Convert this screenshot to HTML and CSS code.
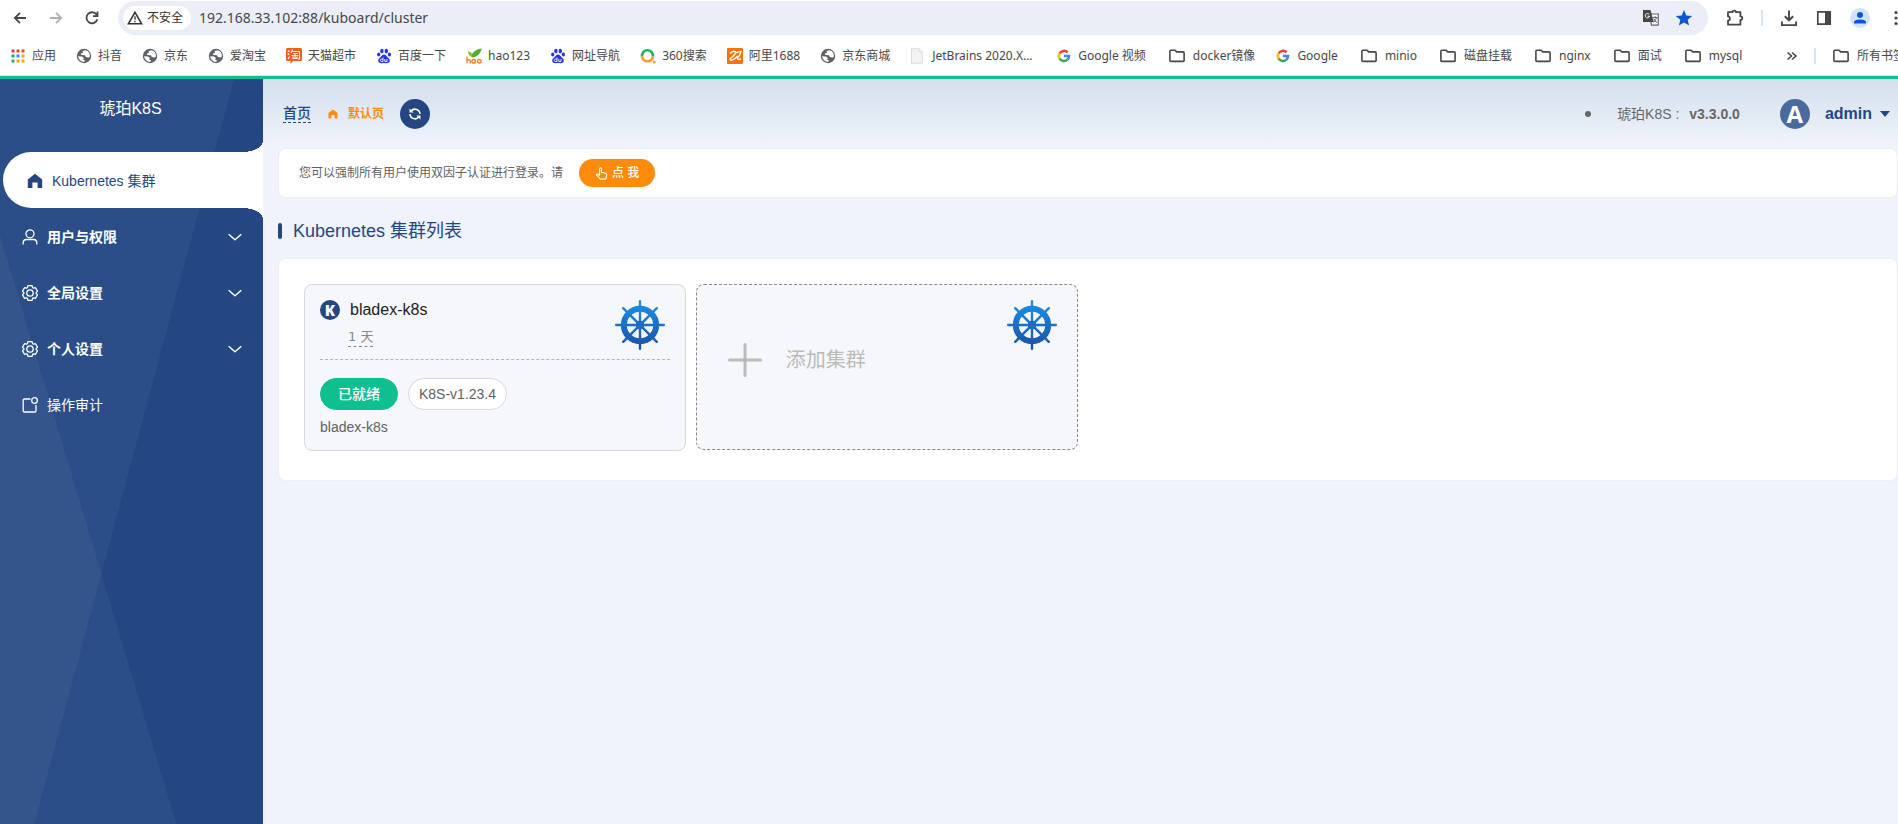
FILE: index.html
```html
<!DOCTYPE html>
<html lang="zh-CN">
<head>
<meta charset="utf-8">
<title>Kuboard</title>
<link rel="stylesheet" href="styles.css">
</head>
<body>
<svg class="defs" aria-hidden="true">
  <defs>
    <linearGradient id="wheel-fill" gradientUnits="userSpaceOnUse" x1="0" y1="0" x2="0" y2="50"><stop offset="0" stop-color="#1b91ea"/><stop offset="1" stop-color="#1c4f9f"/></linearGradient>
    <symbol id="globe" viewBox="0 0 16 16"><circle cx="8" cy="8" r="7.2" fill="#5f6368"/><path d="M9.200 2.200 6.500 3.200 7 4.800 5 5.400 5.200 7 9 7.200 9.800 9 12.800 9.400 13.900 8.400A6 6 0 0 0 9.200 2.200ZM2.100 8.200 6 8.600 7.800 10 7.200 11.800 9 12.200 8.200 13.900A6 6 0 0 1 2.100 8.200Z" fill="#fff"/></symbol>
    <symbol id="folder" viewBox="0 0 16 16"><path d="M.9 3.100q0-.9.900-.9h4.300l1.600 1.700h6.500q.9 0 .9.900v7.700q0 .9-.9.900H1.800q-.9 0-.9-.9Z" fill="none" stroke="#474747" stroke-width="1.600"/></symbol>
    <symbol id="baidu" viewBox="0 0 16 16"><g fill="#2932e1"><ellipse cx="5.900" cy="3.100" rx="1.700" ry="2.300"/><ellipse cx="10.300" cy="3.100" rx="1.700" ry="2.300"/><ellipse cx="2.700" cy="6.500" rx="1.600" ry="2.100"/><ellipse cx="13.400" cy="6.500" rx="1.600" ry="2.100"/><path d="M8 6.400c1.800 0 2.400 1.600 3.600 2.800 1.400 1.300 2.600 2.200 2.100 4.100-.6 2.200-2.400 1.800-5.700 1.800s-5.100.4-5.700-1.800C1.800 11.400 3 10.500 4.400 9.200 5.600 8 6.200 6.400 8 6.400Z"/></g><path d="M7 9.500v4H5.500a1.200 1.200 0 0 1 0-2.400H7M8.800 11v2.500h2.200V11" fill="none" stroke="#fff" stroke-width=".9"/></symbol>
    <symbol id="google" viewBox="0 0 16 16"><g fill="none" stroke-width="2.500"><path d="M3.700 5.300A5 5 0 0 1 11.600 4.400" stroke="#ea4335"/><path d="M3.700 10.700A5 5 0 0 1 3.700 5.300" stroke="#fbbc05"/><path d="M3.700 10.700A5 5 0 0 0 11.400 11.700" stroke="#34a853"/><path d="M11.400 11.700A5 5 0 0 0 13 8H8" stroke="#4285f4"/></g></symbol>
    <symbol id="gear" viewBox="0 0 16 16"><g fill="none" stroke="currentColor" stroke-width="1.300" stroke-linejoin="round"><path d="M5.900.700h4.200l.5 1.900 1 .600 1.900-.5 2 3.500L14.100 7.600v.8l1.400 1.400-2 3.500-1.900-.5-1 .6-.5 1.900H5.900l-.5-1.900-1-.6-1.900.5-2-3.500L1.900 8.400v-.8L.5 6.200l2-3.500 1.900.5 1-.6Z"/><circle cx="8" cy="8" r="3.200"/></g></symbol>
    <symbol id="home" viewBox="0 0 16 16"><path d="M8 .8 15.200 6.500V15H10.600V9.500H5.400V15H.8V6.500Z" fill="currentColor"/></symbol>
    <symbol id="chevron" viewBox="0 0 14 14"><path d="m1.500 4.500 5.500 5L12.500 4.500" fill="none" stroke="currentColor" stroke-width="1.200"/></symbol>
    <symbol id="wheel" viewBox="0 0 50 50"><g fill="none" stroke="url(#wheel-fill)"><circle cx="25" cy="25" r="16.200" stroke-width="6"/><g stroke-width="2.400" stroke-linecap="round"><path d="M25 1.200 25.010 48.800M1.200 25 48.800 25.010M8.200 8.200 41.800 41.800M41.800 8.200 8.200 41.800"/></g></g><circle cx="25" cy="25" r="4.300" fill="#1f6bc0"/></symbol>
  </defs>
</svg>

<header class="browser">
  <div class="toolbar">
    <button class="tool" aria-label="后退"><svg viewBox="0 0 18 18"><path d="M15 9H4M9 3.800 3.800 9 9 14.200" fill="none" stroke="#474747" stroke-width="1.800"/></svg></button>
    <button class="tool" aria-label="前进"><svg viewBox="0 0 18 18"><path d="M3 9h11M9 3.800 14.200 9 9 14.200" fill="none" stroke="#b0b0b0" stroke-width="1.800"/></svg></button>
    <button class="tool reload" aria-label="重新加载"><svg viewBox="0 0 18 18"><path d="M14.300 10.200A5.500 5.500 0 1 1 13.500 5.600L14.500 7M14.500 2.500V7.200H10" fill="none" stroke="#474747" stroke-width="1.800"/></svg></button>
    <div class="omnibox">
      <button class="security"><svg viewBox="0 0 16 16"><path d="M8 2.300 14.600 13.700H1.400Z" fill="none" stroke="#333" stroke-width="1.600"/><path d="M8 6.200v3.600M8 10.800v1.500" stroke="#333" stroke-width="1.300"/></svg>不安全</button>
      <input class="url" aria-label="地址" value="192.168.33.102:88/kuboard/cluster">
      <button class="tool" aria-label="翻译"><svg viewBox="0 0 18 18"><path d="M7.500 5H16.200V16.200H9.500Z" fill="#fff" stroke="#5f6368" stroke-width="1.200"/><path d="M1 1h7.500l3.300 12H1Z" fill="#474747"/><path d="M7.200 5.400A2.200 2.200 0 1 0 7.600 7.200H5.500" fill="none" stroke="#fff"/><path d="M10.800 8.500h4.800M13 7.200v1.300M14.500 8.800q-.8 3-3 4.600M11.800 9.500q1 2.800 3.200 4" fill="none" stroke="#5f6368"/></svg></button>
      <button class="tool" aria-label="收藏"><svg viewBox="0 0 18 18"><path d="m9 1 2.300 5.400 5.900.5-4.500 3.900 1.400 5.700L9 13.500l-5.100 3 1.400-5.700L.8 6.900l5.900-.5Z" fill="#0b57d0"/></svg></button>
    </div>
    <div class="tools">
      <button class="tool" aria-label="扩展程序"><svg viewBox="0 0 18 18"><path d="M2 3.200h4.500C6.500 1 10 1 10 3.200h4.400v4.200c2.500 0 2.500 3.600 0 3.600v4.700H2v-4c2.500-.2 2.500-4.200 0-4.400Z" fill="none" stroke="#474747" stroke-width="1.800" stroke-linejoin="round"/></svg></button>
      <span class="sep"></span>
      <button class="tool" aria-label="下载"><svg viewBox="0 0 18 18"><path d="M9 1.500V11M4.800 7.200 9 11.300l4.200-4.100M1.900 12.500v3.600h14.200v-3.600" fill="none" stroke="#474747" stroke-width="1.900"/></svg></button>
      <button class="tool" aria-label="侧边栏"><svg viewBox="0 0 18 18"><path d="M2.800 2.800h12.400v12.400H2.800Z" fill="none" stroke="#474747" stroke-width="1.700"/><path d="M10 2.500h5.500v13H10Z" fill="#474747"/></svg></button>
      <button class="profile" aria-label="个人资料"><svg viewBox="0 0 20 20"><circle cx="10" cy="10" r="10" fill="#d3e3fd"/><circle cx="10" cy="7" r="3" fill="#0b57d0"/><path d="M4 15.500v-1.500c0-3.500 12-3.500 12 0v1.500Z" fill="#0b57d0"/></svg></button>
      <button class="tool" aria-label="更多"><svg viewBox="0 0 18 18"><g fill="#474747"><circle cx="9" cy="3.500" r="1.600"/><circle cx="9" cy="9" r="1.600"/><circle cx="9" cy="14.500" r="1.600"/></g></svg></button>
    </div>
  </div>
  <nav class="bookmarks" aria-label="书签">
    <a href="#"><svg viewBox="0 0 16 16"><path d="M1.500 1.500h3v3h-3zM6.500 1.500h3v3h-3zM11.500 1.500h3v3h-3z" fill="#ea4335"/><path d="M1.500 6.500h3v3h-3zM1.500 11.500h3v3h-3z" fill="#34a853"/><path d="M6.500 6.500h3v3h-3z" fill="#4285f4"/><path d="M11.500 6.500h3v3h-3zM6.500 11.500h3v3h-3zM11.500 11.500h3v3h-3z" fill="#f5a80c"/></svg>应用</a>
    <a href="#"><svg><use href="#globe"/></svg>抖音</a>
    <a href="#"><svg><use href="#globe"/></svg>京东</a>
    <a href="#"><svg><use href="#globe"/></svg>爱淘宝</a>
    <a href="#"><svg viewBox="0 0 16 16"><path d="M1.500 0h13Q16 0 16 1.500v10q0 1.500-1.500 1.500H7l-2.500 3V13h-3Q0 13 0 11.500v-10Q0 0 1.500 0Z" fill="#fa5a1c"/><path d="M2 2.500 3.500 4M1.700 5.500 3.200 6.800M2 11l1.500-2.500M6.500 1.500 5 5M6 3.500h7.500v7.500h-1.500M7 5.500h5M5.500 7.500h7M9 5.500v4.500M7 8.500V10.500h4V8.500" fill="none" stroke="#fff" stroke-width="1.100"/></svg>天猫超市</a>
    <a href="#"><svg><use href="#baidu"/></svg>百度一下</a>
    <a href="#"><svg viewBox="0 0 16 16"><path d="M2 3.500q3 .2 4 2.500Q9.500 1.200 15.800.500 14 8 6.500 9.500 3 8 2 3.500Z" fill="#4cae32"/><path d="M2 3.500q3 .2 4 2.500l.5 3.500Q3 8 2 3.500Z" fill="#93c81e"/><path d="M1 8.500v7M1 12.500q3-2 3.300.300v2.700M9.200 11v4.500M9.200 13.200a1.700 1.900 0 1 0 0 .1M15.200 13.300a1.900 1.800 0 1 0-3.800 0 1.900 1.800 0 1 0 3.800 0" fill="none" stroke="#f07b22" stroke-width="1.300"/></svg>hao123</a>
    <a href="#"><svg><use href="#baidu"/></svg>网址导航</a>
    <a href="#"><svg viewBox="0 0 16 16"><g fill="none" stroke-width="2.600"><path d="M2 8.500A5.500 5.500 0 1 1 12.900 8.500" stroke="#18b565"/><path d="M2 8.500A5.500 5.500 0 0 0 12.900 8.500" stroke="#fb9a2c"/></g><circle cx="14.300" cy="14" r="1.500" fill="#fb9a2c"/></svg>360搜索</a>
    <a href="#"><svg viewBox="0 0 16 16"><path d="M1 0h14q1 0 1 1v14q0 1-1 1H1q-1 0-1-1V1q0-1 1-1Z" fill="#ff7300"/><path d="M3 5.500Q7 2 8.500 4q0 2.500-4 5.500-3 2.500 0 2.800 3.500-.8 6-4.300M8.500 5q3-1.500 5.500-1.500-1 4-3.500 6.500-.5 2 3.500 1" fill="none" stroke="#fff" stroke-width="1.300"/></svg>阿里1688</a>
    <a href="#"><svg><use href="#globe"/></svg>京东商城</a>
    <a href="#" class="long"><svg viewBox="0 0 16 16"><path d="M1.500.7h7.800l3 3v11.600H1.500Z" fill="#f3f3f3" stroke="#dcdcdc"/><path d="M9.300.7v3h3" fill="#fff" stroke="#dcdcdc"/></svg>JetBrains 2020.X...</a>
    <a href="#"><svg><use href="#google"/></svg>Google 视频</a>
    <a href="#" class="dir"><svg><use href="#folder"/></svg>docker镜像</a>
    <a href="#"><svg><use href="#google"/></svg>Google</a>
    <a href="#" class="dir"><svg><use href="#folder"/></svg>minio</a>
    <a href="#" class="dir"><svg><use href="#folder"/></svg>磁盘挂载</a>
    <a href="#" class="dir"><svg><use href="#folder"/></svg>nginx</a>
    <a href="#" class="dir"><svg><use href="#folder"/></svg>面试</a>
    <a href="#" class="dir"><svg><use href="#folder"/></svg>mysql</a>
    <div class="bookmarks-end">
      <button class="overflow" aria-label="更多书签"><svg viewBox="0 0 12 12"><path d="m1.500 2.500 4 3.500-4 3.500M6 2.500 10 6 6 9.500" fill="none" stroke="#474747" stroke-width="1.600"/></svg></button>
      <span class="sep"></span>
      <a href="#" class="dir"><svg><use href="#folder"/></svg>所有书签</a>
    </div>
  </nav>
</header>

<div class="app">
  <aside class="sidebar">
    <h1 class="brand">琥珀K8S</h1>
    <nav class="menu">
      <a href="#" class="item active"><svg><use href="#home"/></svg><span>Kubernetes 集群</span></a>
      <button class="item"><svg viewBox="0 0 16 16"><g fill="none" stroke="currentColor" stroke-width="1.300"><circle cx="8" cy="4.800" r="4"/><path d="M1.200 15.500v-1.700q0-3.300 3.300-3.300h7q3.300 0 3.300 3.300v1.700"/></g></svg><span>用户与权限</span><svg class="arrow"><use href="#chevron"/></svg></button>
      <button class="item"><svg><use href="#gear"/></svg><span>全局设置</span><svg class="arrow"><use href="#chevron"/></svg></button>
      <button class="item"><svg><use href="#gear"/></svg><span>个人设置</span><svg class="arrow"><use href="#chevron"/></svg></button>
      <a href="#" class="item"><svg viewBox="0 0 16 16"><g fill="none" stroke="currentColor" stroke-width="1.300"><path d="M8.500 2H2.500Q1.200 2 1.200 3.300v10.400q0 1.300 1.300 1.300h10.200q1.300 0 1.300-1.300V8"/><circle cx="12.500" cy="3.500" r="2.800"/></g></svg><span>操作审计</span></a>
    </nav>
  </aside>

  <main class="main">
    <header class="topbar">
      <a href="#" class="crumb">首页</a>
      <span class="current"><svg><use href="#home"/></svg>默认页</span>
      <button class="refresh" aria-label="刷新"><svg viewBox="0 0 14 14"><path d="M3 4.200A5 5 0 0 1 12 7M11 9.800A5 5 0 0 1 2 7" fill="none" stroke="#fff" stroke-width="1.600"/><path d="M1.500 1.500v4h4ZM12.500 12.500v-4h-4Z" fill="#fff"/></svg></button>
      <div class="account">
        <span class="dot"></span>
        <span class="version">琥珀K8S : <b>v3.3.0.0</b></span>
        <button class="user"><span class="avatar">A</span>admin<span class="caret"></span></button>
      </div>
    </header>

    <section class="notice">
      <p>您可以强制所有用户使用双因子认证进行登录。请</p>
      <button class="go"><svg viewBox="0 0 14 14"><path d="M5 8.500V2.200q0-1.200 1-1.200t1 1.200v3.600l4.500 1q1 .3 1 1.400v1.500L11.500 13H5.800L1.500 8.500q.2-1.300 1.700-.8L5 9.500" fill="none" stroke="#fff" stroke-width="1.200" stroke-linejoin="round"/></svg>点 我</button>
    </section>

    <h2 class="heading">Kubernetes 集群列表</h2>

    <section class="panel">
      <article class="cluster">
        <div class="cluster-head">
          <div>
            <h3 class="name"><span class="badge">K</span>bladex-k8s</h3>
            <span class="age">1 天</span>
          </div>
          <svg class="wheel"><use href="#wheel"/></svg>
        </div>
        <div class="tags"><span class="tag ready">已就绪</span><span class="tag">K8S-v1.23.4</span></div>
        <p class="desc">bladex-k8s</p>
      </article>
      <button class="cluster add">
        <svg class="plus" viewBox="0 0 34 34"><path d="M17 1.500v31M1.500 17h31" stroke="#bbb" stroke-width="3" stroke-linecap="round"/></svg>
        <span>添加集群</span>
        <svg class="wheel"><use href="#wheel"/></svg>
      </button>
    </section>
  </main>
</div>
</body>
</html>
```
FILE: styles.css
```css
* { box-sizing: border-box; }
html, body { height: 100%; }
body {
  margin: 0;
  display: flex;
  flex-direction: column;
  overflow: hidden;
  background: #f0f3fc;
  font: 14px/20px "Liberation Sans", "Noto Sans CJK SC", sans-serif;
  color: #606266;
}
button, input { font: inherit; color: inherit; border: 0; padding: 0; background: none; }
a { color: inherit; text-decoration: none; }
h1, h2, h3, p { margin: 0; font-weight: 400; }
svg { flex: none; }
.defs { position: absolute; width: 0; height: 0; }

/* Browser chrome */
.browser {
  flex: none;
  background: #fff;
  border-bottom: 1px solid #e0e0e0;
  font-family: "Noto Sans", "Noto Sans CJK SC", sans-serif;
  color: #474747;
  overflow: hidden;
}
.toolbar { display: flex; align-items: center; height: 36px; padding-left: 11px; }
.tool { flex: none; display: flex; justify-content: center; width: 18px; margin-right: 18px; }
.tool svg { width: 18px; height: 18px; }
.toolbar .reload { margin-right: 17px; }
.omnibox {
  flex: 1;
  display: flex;
  align-items: center;
  height: 34px;
  margin-right: 18px;
  padding-left: 5px;
  border-radius: 17px;
  background: #ebeef7;
}
.omnibox .tool { margin-right: 15px; }
.security {
  display: flex;
  align-items: center;
  gap: 4px;
  height: 24px;
  padding: 0 8px 0 4px;
  border-radius: 12px;
  background: #fff;
  font-size: 12px;
  color: #333;
}
.security svg { width: 16px; height: 16px; }
.url { flex: 1; min-width: 0; margin-left: 8px; font-size: 14px; }
.tools { flex: none; display: flex; align-items: center; width: 172px; }
.tools .tool, .profile { margin-right: 17px; }
.sep { flex: none; width: 2px; height: 16px; background: #d3e3fd; }
.tools .sep { margin-right: 17px; }
.profile { flex: none; display: flex; }
.profile svg { width: 20px; height: 20px; }
.bookmarks {
  display: flex;
  align-items: center;
  gap: 20px;
  height: 39px;
  padding-left: 10px;
  font-size: 12px;
  white-space: nowrap;
}
.bookmarks a { flex: none; display: flex; align-items: center; gap: 6px; }
.bookmarks .long { width: 126px; }
.bookmarks .dir { gap: 8px; margin-left: 3px; }
.bookmarks a svg { width: 16px; height: 16px; }
.bookmarks-end { flex: none; display: flex; align-items: center; gap: 14px; width: 112px; margin-left: auto; }
.overflow { display: flex; }
.overflow svg { width: 12px; height: 12px; }
.bookmarks-end .sep { margin-left: 2px; }

/* Application */
.app { flex: 1; display: flex; min-height: 0; border-top: 3px solid #10bf8f; }
.sidebar {
  position: relative;
  flex: none;
  width: 263px;
  background: #244784;
  color: #fff;
}
.sidebar::before, .sidebar::after {
  content: "";
  position: absolute;
  inset: 0;
  background: rgba(255, 255, 255, 0.04);
}
.sidebar::before { clip-path: polygon(0 0, 89% 0, 13% 100%, 0 100%); }
.sidebar::after { clip-path: polygon(0 21%, 67% 100%, 0 100%); }
.brand, .menu { position: relative; z-index: 1; }
.brand { height: 73px; padding: 18px 2px 0 0; font-size: 16px; line-height: 24px; text-align: center; }
.item {
  position: relative;
  display: flex;
  align-items: center;
  gap: 9px;
  width: 100%;
  height: 56px;
  padding: 2px 20px 0 22px;
}
.item svg { width: 16px; height: 16px; }
button.item { font-weight: 700; }
.item .arrow { margin-left: auto; }
.active {
  width: auto;
  margin-left: 3px;
  padding-left: 24px;
  border-radius: 28px 0 0 28px;
  background: #fff;
  color: #244784;
}
.active::before, .active::after {
  content: "";
  position: absolute;
  right: 0;
  width: 20px;
  height: 11px;
}
.active::before { bottom: 100%; background: radial-gradient(20px 11px at 0 0, transparent 98%, #fff); }
.active::after { top: 100%; background: radial-gradient(20px 11px at 0 100%, transparent 98%, #fff); }

.main { flex: 1; min-width: 0; padding-left: 15px; background: linear-gradient(#d3e0ec, #f0f3fc 68px); }
.topbar { display: flex; align-items: center; height: 69px; padding-left: 5px; }
.crumb { border-bottom: 1px dashed #244784; line-height: 18px; font-weight: 500; color: #244784; }
.current { display: flex; align-items: center; gap: 10px; margin: 0 16px 0 17px; font-size: 12px; font-weight: 700; color: #ff8b0a; }
.current svg { width: 10px; height: 10px; }
.refresh { display: flex; align-items: center; justify-content: center; width: 30px; height: 30px; border-radius: 50%; background: #244784; }
.refresh svg { width: 14px; height: 14px; }
.account { display: flex; align-items: center; margin-left: auto; padding-right: 8px; color: #666; }
.dot { width: 6px; height: 6px; margin-right: 26px; border-radius: 50%; background: #666; }
.version b { margin-left: 6px; }
.user { display: flex; align-items: center; margin-left: 40px; font-size: 16px; font-weight: 700; color: #244784; }
.avatar { width: 30px; height: 30px; margin-right: 15px; border-radius: 50%; background: #4a6a9d; font: 700 24px/30px "Open Sans", sans-serif; text-align: center; color: #fff; }
.caret { margin-left: 8px; border: 5px solid transparent; border-top: 6px solid #244784; border-bottom: 0; }

.notice, .panel { border: 1px solid #ebeef5; border-radius: 8px; background: #fff; }
.notice { display: flex; align-items: center; gap: 16px; height: 50px; padding-left: 20px; font-size: 12px; }
.go {
  display: flex;
  align-items: center;
  gap: 4px;
  height: 28px;
  padding: 0 16px;
  border-radius: 14px;
  background: #ff8b0a;
  font-size: 12px;
  font-weight: 500;
  color: #fff;
}
.go svg { width: 13px; height: 13px; }
.heading { display: flex; align-items: center; gap: 11px; height: 60px; padding-top: 6px; font-size: 18px; color: #244784; }
.heading::before { content: ""; width: 4px; height: 16px; border-radius: 2px; background: #244784; }
.panel {
  display: grid;
  grid-template-columns: repeat(4, 1fr);
  align-items: start;
  gap: 10px;
  padding: 25px 36px 29px 25px;
}
.cluster { height: 167px; padding: 15px; border: 1px solid #d6d9e0; border-radius: 8px; background: #f5f7fb; }
.cluster-head { display: flex; justify-content: space-between; height: 60px; border-bottom: 1px dashed #a9b4cf; }
.name { display: flex; align-items: center; gap: 10px; font-size: 16px; color: #222; }
.badge { width: 20px; height: 20px; border-radius: 50%; background: #244784; font: 800 15px/20px "Open Sans", sans-serif; text-align: center; color: #fff; }
.age { display: inline-block; margin: 8px 0 0 28px; border-bottom: 1px dashed #888; font: 13px/18px "DejaVu Sans", "Noto Sans CJK SC", sans-serif; color: #888; }
.wheel { width: 50px; height: 50px; margin-right: 5px; }
.tags { display: flex; gap: 10px; margin-top: 18px; }
.tag { height: 32px; padding: 0 10px; border: 1px solid #d6d9e0; border-radius: 16px; background: #fff; line-height: 30px; }
.ready { padding: 0 17px; border-color: #10bf8f; background: #10bf8f; font-weight: 500; color: #fff; }
.desc { margin-top: 7px; }
.add { display: flex; align-items: center; height: 166px; padding-left: 31px; border: 1px dashed #888; font-size: 20px; color: #bbb; }
.plus { width: 34px; height: 34px; margin-top: -14px; margin-right: 24px; }
.add span { margin-top: -14px; }
.add .wheel { align-self: flex-start; margin-left: auto; }
```
